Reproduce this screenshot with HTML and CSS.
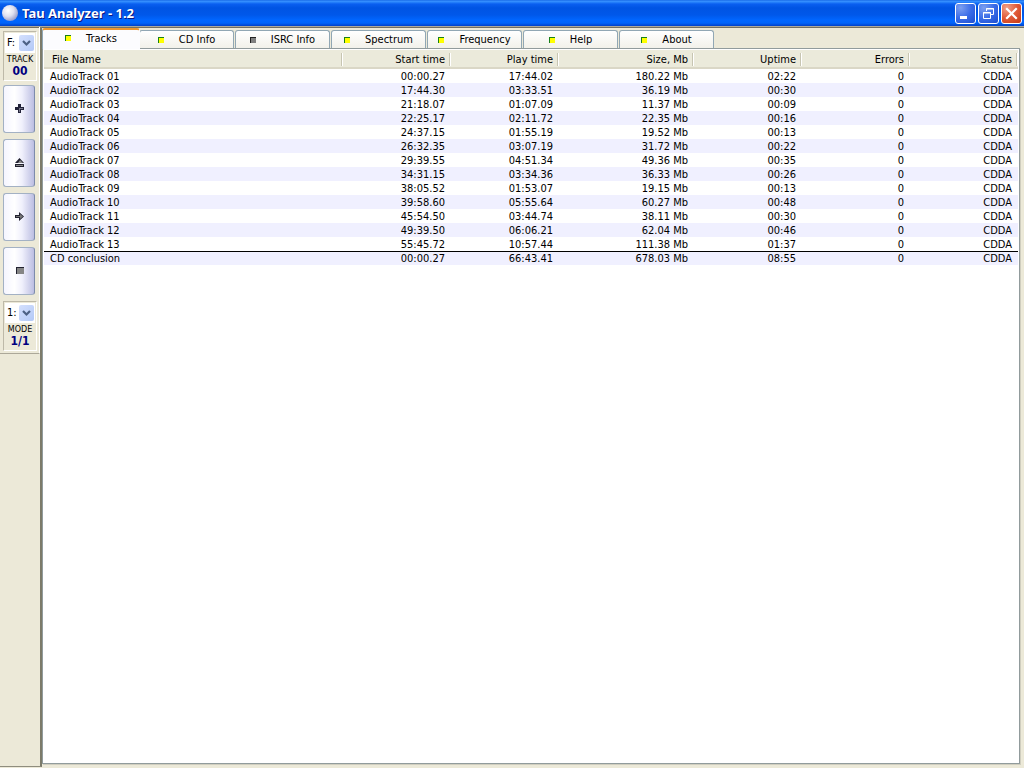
FILE: index.html
```html
<!DOCTYPE html>
<html lang="en">
<head>
<meta charset="utf-8">
<title>Tau Analyzer - 1.2</title>
<link rel="stylesheet" href="styles.css">
</head>
<body>
<header class="titlebar">
  <svg class="app-icon" viewBox="0 0 16 16" aria-hidden="true">
    <defs><radialGradient id="ball" cx=".38" cy=".35" r=".65"><stop offset="0" stop-color="#fff"/><stop offset=".55" stop-color="#dfe0f0"/><stop offset="1" stop-color="#9fa3cc"/></radialGradient></defs>
    <circle cx="8" cy="8" r="8" fill="url(#ball)"/>
  </svg>
  <h1 class="title">Tau Analyzer - 1.2</h1>
  <div class="window-buttons">
    <button class="winbtn" aria-label="Minimize"><svg viewBox="0 0 19 19"><path d="M4 12h7v3H4z" fill="#fff"/></svg></button>
    <button class="winbtn" aria-label="Restore"><svg viewBox="0 0 19 19" fill="none" stroke="#fff"><path d="M7.500 7V4.500h7v6H12M7 5h8M4.500 8.500h7v6h-7zM4 9h8"/></svg></button>
    <button class="winbtn winbtn-close" aria-label="Close"><svg viewBox="0 0 19 19"><path d="M5 5l9 9M14 5l-9 9" stroke="#fff" stroke-width="2.200" stroke-linecap="square"/></svg></button>
  </div>
</header>
<div class="workspace">
  <aside class="sidebar">
    <div class="tools">
      <div class="panel">
        <div class="picker">
          <select class="picker-select" id="drive" aria-labelledby="track-label"><option>F:</option></select>
          <svg class="picker-arrow" viewBox="0 0 15 16" aria-hidden="true"><path d="M4 6l3.500 3.500L11 6" fill="none" stroke="#4d6185" stroke-width="2.200"/></svg>
        </div>
        <label class="panel-label" id="track-label" for="drive">TRACK</label>
        <output class="panel-value">00</output>
      </div>
      <button class="tool" aria-label="Open"><svg viewBox="0 0 10 10"><path d="M4 0h3v3h3v3H7v3H4V6H1V3h3z" fill="#222238"/><path d="M5 4h4v1H6v3H5z" fill="#77778a"/></svg></button>
      <button class="tool" aria-label="Eject"><svg viewBox="0 0 10 10"><path d="M5.500 0L10 5H1zM1 6h9v3H1z" fill="#222230"/><path d="M6 2l3 3H4zM2 7h7v1H2z" fill="#888"/></svg></button>
      <button class="tool" aria-label="Start"><svg viewBox="0 0 10 10"><path d="M1 3h4V0l5 4.500L5 9V6H1z" fill="#222230"/><path d="M2 4h4V2l3 2.500L6 7V5H2z" fill="#777"/></svg></button>
      <button class="tool" aria-label="Stop"><svg viewBox="0 0 10 10"><path d="M2 1h8v7H2z" fill="#222230"/><path d="M3 2h7v6H3z" fill="#858585"/></svg></button>
      <div class="panel">
        <div class="picker">
          <select class="picker-select" id="mode" aria-labelledby="mode-label"><option>1:</option></select>
          <svg class="picker-arrow" viewBox="0 0 15 16" aria-hidden="true"><path d="M4 6l3.500 3.500L11 6" fill="none" stroke="#4d6185" stroke-width="2.200"/></svg>
        </div>
        <label class="panel-label" id="mode-label" for="mode">MODE</label>
        <output class="panel-value">1/1</output>
      </div>
    </div>
  </aside>
  <main class="content">
    <nav class="tabs" role="tablist">
      <button class="tab tab-active" role="tab" aria-selected="true"><i class="led"></i>Tracks</button>
      <button class="tab" role="tab"><i class="led"></i>CD Info</button>
      <button class="tab" role="tab"><i class="led led-off"></i>ISRC Info</button>
      <button class="tab" role="tab"><i class="led"></i>Spectrum</button>
      <button class="tab" role="tab"><i class="led"></i>Frequency</button>
      <button class="tab" role="tab"><i class="led"></i>Help</button>
      <button class="tab" role="tab"><i class="led"></i>About</button>
    </nav>
    <section class="pane">
      <table class="tracks">
        <colgroup><col><col class="col"><col class="col"><col class="col-size"><col class="col"><col class="col"><col class="col"></colgroup>
        <thead><tr><th>File Name</th><th>Start time</th><th>Play time</th><th>Size, Mb</th><th>Uptime</th><th>Errors</th><th>Status</th></tr></thead>
        <tbody>
          <tr><td>AudioTrack 01</td><td>00:00.27</td><td>17:44.02</td><td>180.22 Mb</td><td>02:22</td><td>0</td><td>CDDA</td></tr>
          <tr><td>AudioTrack 02</td><td>17:44.30</td><td>03:33.51</td><td>36.19 Mb</td><td>00:30</td><td>0</td><td>CDDA</td></tr>
          <tr><td>AudioTrack 03</td><td>21:18.07</td><td>01:07.09</td><td>11.37 Mb</td><td>00:09</td><td>0</td><td>CDDA</td></tr>
          <tr><td>AudioTrack 04</td><td>22:25.17</td><td>02:11.72</td><td>22.35 Mb</td><td>00:16</td><td>0</td><td>CDDA</td></tr>
          <tr><td>AudioTrack 05</td><td>24:37.15</td><td>01:55.19</td><td>19.52 Mb</td><td>00:13</td><td>0</td><td>CDDA</td></tr>
          <tr><td>AudioTrack 06</td><td>26:32.35</td><td>03:07.19</td><td>31.72 Mb</td><td>00:22</td><td>0</td><td>CDDA</td></tr>
          <tr><td>AudioTrack 07</td><td>29:39.55</td><td>04:51.34</td><td>49.36 Mb</td><td>00:35</td><td>0</td><td>CDDA</td></tr>
          <tr><td>AudioTrack 08</td><td>34:31.15</td><td>03:34.36</td><td>36.33 Mb</td><td>00:26</td><td>0</td><td>CDDA</td></tr>
          <tr><td>AudioTrack 09</td><td>38:05.52</td><td>01:53.07</td><td>19.15 Mb</td><td>00:13</td><td>0</td><td>CDDA</td></tr>
          <tr><td>AudioTrack 10</td><td>39:58.60</td><td>05:55.64</td><td>60.27 Mb</td><td>00:48</td><td>0</td><td>CDDA</td></tr>
          <tr><td>AudioTrack 11</td><td>45:54.50</td><td>03:44.74</td><td>38.11 Mb</td><td>00:30</td><td>0</td><td>CDDA</td></tr>
          <tr><td>AudioTrack 12</td><td>49:39.50</td><td>06:06.21</td><td>62.04 Mb</td><td>00:46</td><td>0</td><td>CDDA</td></tr>
          <tr><td>AudioTrack 13</td><td>55:45.72</td><td>10:57.44</td><td>111.38 Mb</td><td>01:37</td><td>0</td><td>CDDA</td></tr>
          <tr class="total"><td>CD conclusion</td><td>00:00.27</td><td>66:43.41</td><td>678.03 Mb</td><td>08:55</td><td>0</td><td>CDDA</td></tr>
        </tbody>
      </table>
    </section>
  </main>
</div>
</body>
</html>
```
FILE: styles.css
```css
* { box-sizing: border-box; }

body {
  margin: 0;
  height: 100vh;
  display: flex;
  flex-direction: column;
  background: #ece9d8;
  color: #000;
  font-family: "DejaVu Sans Condensed", "Noto Sans", sans-serif;
  font-size: 11px;
  line-height: 14px;
}

button, select { font: inherit; color: inherit; padding: 0; margin: 0; }

.titlebar {
  display: flex;
  align-items: center;
  gap: 4px;
  height: 26px;
  flex: none;
  padding: 0 2px;
  background: linear-gradient(#0a5ce0 0, #3c94ff 1px, #2a86fc 2px, #0a5ff0 4px, #0054e3 8px, #0058ea 15px, #0066ff 20px, #0064fa 23px, #0040c8 26px);
}
.app-icon { width: 16px; height: 16px; }
.title {
  flex: 1;
  margin: 0;
  color: #fff;
  font-family: "Noto Sans", sans-serif;
  font-size: 13px;
  font-weight: bold;
  line-height: 18px;
  text-shadow: 1px 1px #0a1883;
}
.window-buttons { display: flex; gap: 2px; }
.winbtn {
  width: 21px;
  height: 21px;
  border: 1px solid #fff;
  border-radius: 3px;
  background: radial-gradient(circle at 25% 20%, #7c9ff0, #3a6ce8 50%, #1c4ed0);
}
.winbtn-close { background: radial-gradient(circle at 25% 20%, #f0a088, #e05a38 50%, #c63a14); }
.winbtn svg { display: block; width: 19px; height: 19px; }

.workspace {
  flex: 1;
  min-height: 0;
  display: flex;
  border-top: 1px solid #aca899;
  box-shadow: inset 0 1px #716f64;
}

.sidebar {
  width: 42px;
  flex: none;
  margin-bottom: 1px;
  border-right: 2px solid #7c7b6a;
  border-bottom: 1px solid #8f8d7e;
}
.tools {
  display: flex;
  flex-direction: column;
  gap: 6px;
  padding: 4px 3px 2px;
  border-bottom: 1px solid #aca899;
  border-right: 1px solid #fff;
}
.panel {
  display: flex;
  flex-direction: column;
  align-items: center;
  width: 34px;
  height: 50px;
  padding: 1px;
  border: 1px solid;
  border-color: #bdb9a8 #fff #fff #bdb9a8;
}
.panel:first-child { margin-bottom: -2px; }
.picker { position: relative; width: 100%; height: 20px; background: #fff; }
.picker-select {
  appearance: none;
  display: block;
  width: 100%;
  height: 20px;
  padding-left: 2px;
  border: 0;
  background: transparent;
}
.picker-arrow {
  position: absolute;
  top: 2px;
  right: 1px;
  width: 15px;
  height: 16px;
  border-radius: 2px;
  background: linear-gradient(135deg, #d4e0fd, #b3c9f7);
  pointer-events: none;
}
.panel-label {
  height: 10px;
  font-family: "DejaVu Sans", sans-serif;
  font-size: 8px;
  line-height: 14px;
}
.panel-value { color: #000080; font-size: 12px; font-weight: bold; line-height: 16px; }
.tool {
  display: grid;
  place-items: center;
  width: 32px;
  height: 48px;
  border: 1px solid #a3b1c4;
  border-right-color: #7d8bab;
  border-radius: 3px;
  background: linear-gradient(90deg, #f5f5ff, #fff 35%, #f0f0fc 60%, #bcbee2);
}
.tool svg { width: 10px; height: 10px; }

.content {
  flex: 1;
  min-width: 0;
  display: flex;
  flex-direction: column;
  padding: 1px 4px 4px 0;
}
.tabs { display: flex; align-items: flex-end; gap: 1px; height: 20px; }
.tab {
  display: flex;
  align-items: center;
  justify-content: center;
  gap: 15px;
  width: 95px;
  height: 18px;
  padding-top: 1px;
  border: 1px solid #91a7b4;
  border-bottom: 0;
  border-radius: 3px 3px 0 0;
  background: linear-gradient(#fff, #f2f1ea);
}
.tab-active {
  width: 98px;
  height: 21px;
  margin: 0 -2px -1px 0;
  padding-bottom: 3px;
  border-top: 2px solid #f0962c;
  border-right-color: #fcfcfe;
  background: #fcfcfe;
  z-index: 1;
}
.led {
  width: 6px;
  height: 6px;
  margin-bottom: 1px;
  border: solid #188018;
  border-width: 1px 0 0 1px;
  background: #ff0;
}
.led-off { border-color: #222; background: #808080; }

.pane {
  flex: 1;
  padding: 1px;
  border: 1px solid #919b9c;
  background: #fff;
  box-shadow: 1px 1px #d0cebf;
}
.tracks { width: 100%; table-layout: fixed; border-spacing: 0; }
.col { width: 108px; }
.col-size { width: 135px; }
.tracks th {
  height: 19px;
  padding: 2px 6px 0 0;
  text-align: right;
  font-weight: normal;
  line-height: 14px;
  background: linear-gradient(90deg, #fff, #fff) 100% 3px / 1px 13px no-repeat, linear-gradient(90deg, #c7c5b2, #c7c5b2) calc(100% - 1px) 3px / 1px 13px no-repeat, #ebeadb;
  border-bottom: 2px solid #dad7c6;
}
.tracks th:first-child { text-align: left; padding-left: 8px; }
.tracks td { height: 14px; padding: 1px 6px 0 0; line-height: 13px; text-align: right; }
.tracks td:first-child { text-align: left; padding-left: 6px; }
.tracks tbody tr:nth-child(even) { background: #f0f0ff; }
.tracks .total td { padding-top: 0; border-top: 1px solid #000; }
```
